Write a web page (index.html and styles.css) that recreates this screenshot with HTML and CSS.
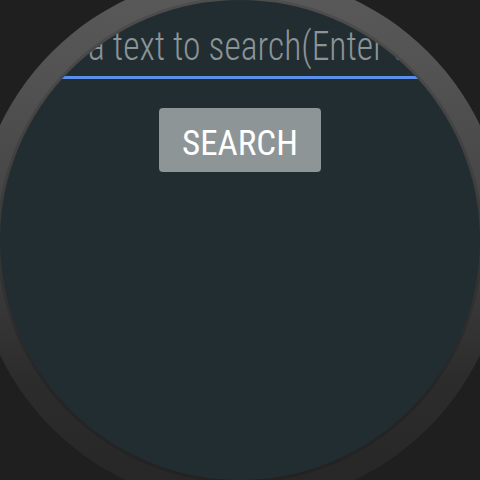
FILE: index.html
```html
<!DOCTYPE html>
<html>
<head>
<meta charset="utf-8">
<link rel="stylesheet" href="styles.css">
</head>
<body>
<div class="bezel">
  <div class="screen">
    <div class="field"><span class="placeholder">a text to search(Enter to search)</span></div>
    <div class="actions"><button class="search-btn"><span class="btn-label">SEARCH</span></button></div>
  </div>
</div>
</body>
</html>
```
FILE: styles.css
```css
html, body {
  margin: 0;
  padding: 0;
  width: 480px;
  height: 480px;
  overflow: hidden;
  background: #1f1f1f;
}
.bezel {
  width: 480px;
  height: 480px;
  padding: 26px;
  margin: -26px;
  border-radius: 50%;
  background: linear-gradient(to bottom, #5a5a5a 0%, #525252 20%, #414141 50%, #2c2c2c 76%, #262626 100%);
}
.screen {
  width: 480px;
  height: 480px;
  border-radius: 50%;
  overflow: hidden;
  background: #222d32;
  box-shadow: 0 0 0 3px rgba(0, 0, 0, 0.12);
  font-family: Roboto, "Noto Sans", sans-serif;
}
.field {
  margin: 0 20px;
  padding: 23px 0 5px 68px;
  height: 48px;
  line-height: 48px;
  border-bottom: 3px solid #5a8ee8;
  white-space: nowrap;
  overflow: hidden;
}
.placeholder {
  display: inline-block;
  font-size: 40px;
  font-weight: 300;
  font-stretch: 75%;
  color: #8b9497;
  transform: scaleX(0.89);
  transform-origin: left center;
}
.actions {
  display: flex;
  justify-content: center;
  padding-top: 29px;
}
.search-btn {
  width: 162px;
  height: 64px;
  border: none;
  border-radius: 4px;
  background: #8e9597;
  color: #ffffff;
  font-family: Roboto, "Noto Sans", sans-serif;
  font-size: 35px;
  font-weight: 400;
  font-stretch: 80%;
  padding: 7px 0 0;
  display: flex;
  align-items: center;
  justify-content: center;
}
.btn-label {
  line-height: 1;
}
```
